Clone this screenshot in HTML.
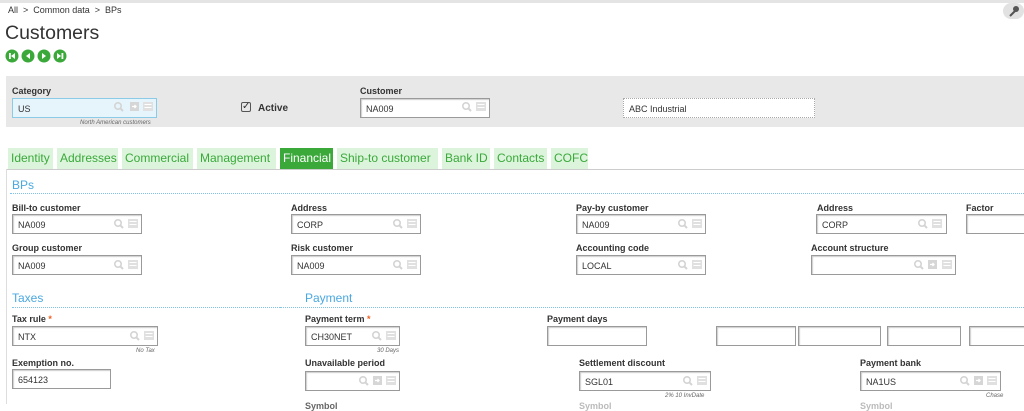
<!DOCTYPE html>
<html><head><meta charset="utf-8"><style>
*{margin:0;padding:0;box-sizing:border-box}
body{width:1024px;height:404px;overflow:hidden;background:#fff;font-family:"Liberation Sans",sans-serif;position:relative;color:#333}
.a{position:absolute}
.lbl{position:absolute;font-size:9px;font-weight:bold;color:#333;white-space:nowrap}
.in{position:absolute;height:20px;border:1px solid #9a9a9a;box-shadow:inset 1px 1px 1px #ccc;background:#fff;font-size:9px;color:#333;padding:5px 0 0 5px;white-space:nowrap}
.sub{position:absolute;font-size:6px;font-style:italic;color:#666;white-space:nowrap}
.tab{position:absolute;top:148px;height:21px;background:#dcf4dc;color:#3aa93a;font-size:12px;padding:3px 0 0 3px;white-space:nowrap}
.h{position:absolute;font-size:12px;color:#4aa8e0}
.dl{position:absolute;height:0;border-top:1px dotted #7fc4e8}
</style></head><body>
<div class="a" style="left:0;top:0;width:1024px;height:3px;background:#e4e4e4"></div>
<div class="a" style="left:8px;top:5px;font-size:9px;color:#333">All &nbsp;&gt;&nbsp; Common data &nbsp;&gt;&nbsp; BPs</div>
<div class="a" style="left:1003px;top:3px;width:21px;height:16px;border-radius:8px;background:#e2e2e2"><svg width="21" height="16"><path d="M7 13 L12 8" stroke="#555" stroke-width="2"/><circle cx="13" cy="6" r="3" fill="#555"/></svg></div>
<div class="a" style="left:5px;top:22px;font-size:19.5px;color:#333">Customers</div>
<svg class="a" style="left:5px;top:49px" width="80" height="15">
<g fill="#3aa93a"><circle cx="7" cy="7" r="6.5"/><circle cx="23" cy="7" r="6.5"/><circle cx="39" cy="7" r="6.5"/><circle cx="55" cy="7" r="6.5"/></g>
<g fill="#fff"><rect x="4" y="4" width="1.8" height="6"/><path d="M10 4 L6 7 L10 10Z"/><path d="M25 4 L21 7 L25 10Z"/><path d="M37 4 L41 7 L37 10Z"/><path d="M52 4 L56 7 L52 10Z"/><rect x="56.5" y="4" width="1.8" height="6"/></g></svg>

<div class="a" style="left:6px;top:76px;width:1018px;height:51px;background:#e8e8e8"></div>
<div class="lbl" style="left:12px;top:86px">Category</div>
<div class="in" style="left:12px;top:98px;width:145px;background:#e6f4fb;border-color:#8ccbe8;box-shadow:none">US</div>
<div class="sub" style="left:80px;top:120px">North American customers</div>
<div class="a" style="left:241px;top:102px;width:10px;height:10px;border:1px solid #555;border-radius:2px;font-size:10px;line-height:8px;color:#333">&#10003;</div>
<div class="lbl" style="left:258px;top:103px;font-size:10px">Active</div>
<div class="lbl" style="left:360px;top:86px">Customer</div>
<div class="in" style="left:360px;top:98px;width:130px">NA009</div>
<div class="in" style="left:623px;top:98px;width:192px;border:1px dotted #aaa;box-shadow:none">ABC Industrial</div>

<div class="tab" style="left:8px;width:45px">Identity</div>
<div class="tab" style="left:57px;width:61px">Addresses</div>
<div class="tab" style="left:122px;width:71px">Commercial</div>
<div class="tab" style="left:197px;width:79px">Management</div>
<div class="tab" style="left:280px;width:53px;background:#3aa93a;color:#fff">Financial</div>
<div class="tab" style="left:337px;width:101px">Ship-to customer</div>
<div class="tab" style="left:442px;width:48px">Bank ID</div>
<div class="tab" style="left:494px;width:53px">Contacts</div>
<div class="tab" style="left:551px;width:37px">COFC</div>
<div class="a" style="left:6px;top:169px;width:1018px;height:1px;background:#ccc"></div>
<div class="a" style="left:6px;top:169px;width:1px;height:235px;background:#ddd"></div>

<div class="h" style="left:12px;top:178px">BPs</div>
<div class="dl" style="left:10px;top:193px;width:1014px"></div>
<div class="lbl" style="left:12px;top:203px">Bill-to customer</div>
<div class="lbl" style="left:291px;top:203px">Address</div>
<div class="lbl" style="left:576px;top:203px">Pay-by customer</div>
<div class="lbl" style="left:817px;top:203px">Address</div>
<div class="lbl" style="left:966px;top:203px">Factor</div>
<div class="in" style="left:12px;top:214px;width:130px">NA009</div>
<div class="in" style="left:291px;top:214px;width:130px">CORP</div>
<div class="in" style="left:576px;top:214px;width:130px">NA009</div>
<div class="in" style="left:816px;top:214px;width:131px">CORP</div>
<div class="in" style="left:966px;top:214px;width:70px"></div>
<div class="lbl" style="left:12px;top:243px">Group customer</div>
<div class="lbl" style="left:291px;top:243px">Risk customer</div>
<div class="lbl" style="left:576px;top:243px">Accounting code</div>
<div class="lbl" style="left:811px;top:243px">Account structure</div>
<div class="in" style="left:12px;top:255px;width:130px">NA009</div>
<div class="in" style="left:291px;top:255px;width:130px">NA009</div>
<div class="in" style="left:576px;top:255px;width:130px">LOCAL</div>
<div class="in" style="left:811px;top:255px;width:145px"></div>

<div class="h" style="left:12px;top:291px">Taxes</div>
<div class="dl" style="left:12px;top:307px;width:280px"></div>
<div class="h" style="left:305px;top:291px">Payment</div>
<div class="dl" style="left:280px;top:307px;width:744px"></div>
<div class="lbl" style="left:12px;top:314px">Tax rule <span style="color:#f06020">*</span></div>
<div class="in" style="left:12px;top:326px;width:146px">NTX</div>
<div class="sub" style="left:136px;top:348px">No Tax</div>
<div class="lbl" style="left:12px;top:358px">Exemption no.</div>
<div class="in" style="left:12px;top:369px;width:99px">654123</div>
<div class="lbl" style="left:305px;top:314px">Payment term <span style="color:#f06020">*</span></div>
<div class="in" style="left:305px;top:326px;width:95px">CH30NET</div>
<div class="sub" style="left:377px;top:348px">30 Days</div>
<div class="lbl" style="left:547px;top:314px">Payment days</div>
<div class="in" style="left:547px;top:326px;width:100px"></div>
<div class="in" style="left:716px;top:326px;width:80px"></div>
<div class="in" style="left:798px;top:326px;width:83px"></div>
<div class="in" style="left:887px;top:326px;width:74px"></div>
<div class="in" style="left:969px;top:326px;width:70px"></div>
<div class="lbl" style="left:305px;top:358px">Unavailable period</div>
<div class="in" style="left:305px;top:371px;width:95px"></div>
<div class="lbl" style="left:579px;top:358px">Settlement discount</div>
<div class="in" style="left:579px;top:371px;width:132px">SGL01</div>
<div class="sub" style="left:665px;top:393px">2% 10 InvDate</div>
<div class="lbl" style="left:860px;top:358px">Payment bank</div>
<div class="in" style="left:860px;top:371px;width:141px">NA1US</div>
<div class="sub" style="left:986px;top:393px">Chase</div>

<svg class="a" style="left:0;top:0" width="1024" height="404">
<defs><g id="q"><circle cx="4" cy="4" r="3.2" fill="none" stroke="#d4d4d4" stroke-width="1.6"/><path d="M6.3 6.3 L9 9" stroke="#d4d4d4" stroke-width="2"/></g>
<g id="b"><rect x="0" y="0" width="10" height="9" fill="#e0e0e0"/><rect x="1.5" y="2" width="7" height="1" fill="#fff"/><rect x="1.5" y="5" width="7" height="1" fill="#fff"/></g>
<g id="e"><rect x="0" y="0" width="9" height="9" fill="#d6d6d6"/><path d="M2 4.5 H6 M4.5 3 L6 4.5 L4.5 6" stroke="#fff" stroke-width="1.3" fill="none"/></g></defs>
<use href="#q" x="114" y="102"/><use href="#e" x="130" y="102"/><use href="#b" x="143" y="102"/>
<use href="#q" x="462" y="102"/><use href="#b" x="476" y="102"/>
<use href="#q" x="114" y="219"/><use href="#b" x="128" y="219"/>
<use href="#q" x="393" y="219"/><use href="#b" x="407" y="219"/>
<use href="#q" x="678" y="219"/><use href="#b" x="692" y="219"/>
<use href="#q" x="918" y="219"/><use href="#b" x="932" y="219"/>
<use href="#q" x="114" y="260"/><use href="#b" x="128" y="260"/>
<use href="#q" x="393" y="260"/><use href="#b" x="407" y="260"/>
<use href="#q" x="678" y="260"/><use href="#b" x="692" y="260"/>
<use href="#q" x="914" y="260"/><use href="#e" x="928" y="260"/><use href="#b" x="942" y="260"/>
<use href="#q" x="130" y="331"/><use href="#b" x="144" y="331"/>
<use href="#q" x="372" y="331"/><use href="#b" x="386" y="331"/>
<use href="#q" x="359" y="376"/><use href="#e" x="373" y="376"/><use href="#b" x="386" y="376"/>
<use href="#q" x="683" y="376"/><use href="#b" x="697" y="376"/>
<use href="#q" x="960" y="376"/><use href="#e" x="974" y="376"/><use href="#b" x="987" y="376"/>
</svg>
<div class="lbl" style="left:305px;top:401px;color:#666">Symbol</div>
<div class="lbl" style="left:579px;top:401px;color:#bbb">Symbol</div>
<div class="lbl" style="left:860px;top:401px;color:#bbb">Symbol</div>
</body></html>
